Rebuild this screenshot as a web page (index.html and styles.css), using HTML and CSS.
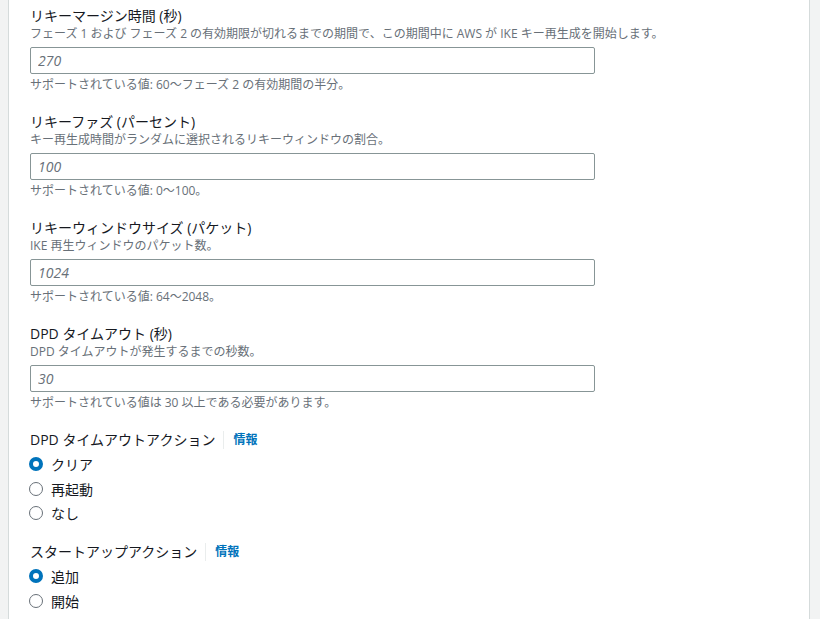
FILE: index.html
```html
<!DOCTYPE html>
<html lang="ja">
<head>
<meta charset="utf-8">
<link rel="stylesheet" href="styles.css">
</head>
<body>
<div class="panel">
  <div class="field">
    <div class="label">リキーマージン時間 (秒)</div>
    <div class="desc">フェーズ 1 および フェーズ 2 の有効期限が切れるまでの期間で、この期間中に AWS が IKE キー再生成を開始します。</div>
    <input class="input" type="text" placeholder="270">
    <div class="help">サポートされている値: 60～フェーズ 2 の有効期間の半分。</div>
  </div>
  <div class="field">
    <div class="label">リキーファズ (パーセント)</div>
    <div class="desc">キー再生成時間がランダムに選択されるリキーウィンドウの割合。</div>
    <input class="input" type="text" placeholder="100">
    <div class="help">サポートされている値: 0～100。</div>
  </div>
  <div class="field">
    <div class="label">リキーウィンドウサイズ (パケット)</div>
    <div class="desc">IKE 再生ウィンドウのパケット数。</div>
    <input class="input" type="text" placeholder="1024">
    <div class="help">サポートされている値: 64～2048。</div>
  </div>
  <div class="field">
    <div class="label">DPD タイムアウト (秒)</div>
    <div class="desc">DPD タイムアウトが発生するまでの秒数。</div>
    <input class="input" type="text" placeholder="30">
    <div class="help">サポートされている値は 30 以上である必要があります。</div>
  </div>
  <div class="group">
    <div class="group-label"><span>DPD タイムアウトアクション</span><span class="divider"></span><a class="info">情報</a></div>
    <div class="radio checked"><span class="dot"></span><span>クリア</span></div>
    <div class="radio"><span class="dot"></span><span>再起動</span></div>
    <div class="radio"><span class="dot"></span><span>なし</span></div>
  </div>
  <div class="group">
    <div class="group-label"><span>スタートアップアクション</span><span class="divider"></span><a class="info">情報</a></div>
    <div class="radio checked"><span class="dot"></span><span>追加</span></div>
    <div class="radio"><span class="dot"></span><span>開始</span></div>
  </div>
</div>
</body>
</html>
```
FILE: styles.css
```css
html, body {
  margin: 0;
  padding: 0;
  background: #f2f3f3;
  height: 100%;
  overflow: hidden;
}
body {
  font-family: "Open Sans", "Noto Sans CJK JP", sans-serif;
  color: #16191f;
}
.panel {
  margin-left: 8px;
  width: 802px;
  min-height: 100%;
  background: #ffffff;
  border-left: 1px solid #d5dbdb;
  border-right: 1px solid #d5dbdb;
  padding: 6px 0 0 21px;
  box-sizing: border-box;
  display: flex;
  flex-direction: column;
}
.field {
  display: flex;
  flex-direction: column;
  margin-bottom: 19px;
}
.label {
  font-size: 14px;
  line-height: 20px;
}
.desc, .help {
  font-size: 12px;
  line-height: 16px;
  color: #687078;
}
.input {
  margin: 5px 0 0;
  width: 565px;
  height: 27px;
  box-sizing: border-box;
  border: 1px solid #879596;
  border-radius: 2px;
  padding: 0 7px;
  font-family: "Open Sans", sans-serif;
  font-size: 14px;
  outline: none;
}
.input::placeholder {
  color: #687078;
  font-style: italic;
}
.help {
  margin-top: 3px;
}
.group {
  margin-top: 0;
  margin-bottom: 16.5px;
}
.group-label {
  display: flex;
  align-items: center;
  font-size: 14px;
  line-height: 20px;
  height: 20px;
  margin-bottom: 2px;
}
.divider {
  width: 1px;
  height: 18px;
  background: #eaeded;
  margin: 0 9px 0 8px;
}
.info {
  color: #0073bb;
  font-size: 12px;
  font-weight: 600;
}
.radio {
  display: flex;
  align-items: center;
  height: 24.5px;
  font-size: 14px;
}
.dot {
  width: 14px;
  height: 14px;
  box-sizing: border-box;
  border-radius: 50%;
  border: 1.5px solid #687078;
  margin: 0 8px 0 -1px;
  background: #fff;
}
.radio.checked .dot {
  border: 4px solid #0073bb;
}
```
